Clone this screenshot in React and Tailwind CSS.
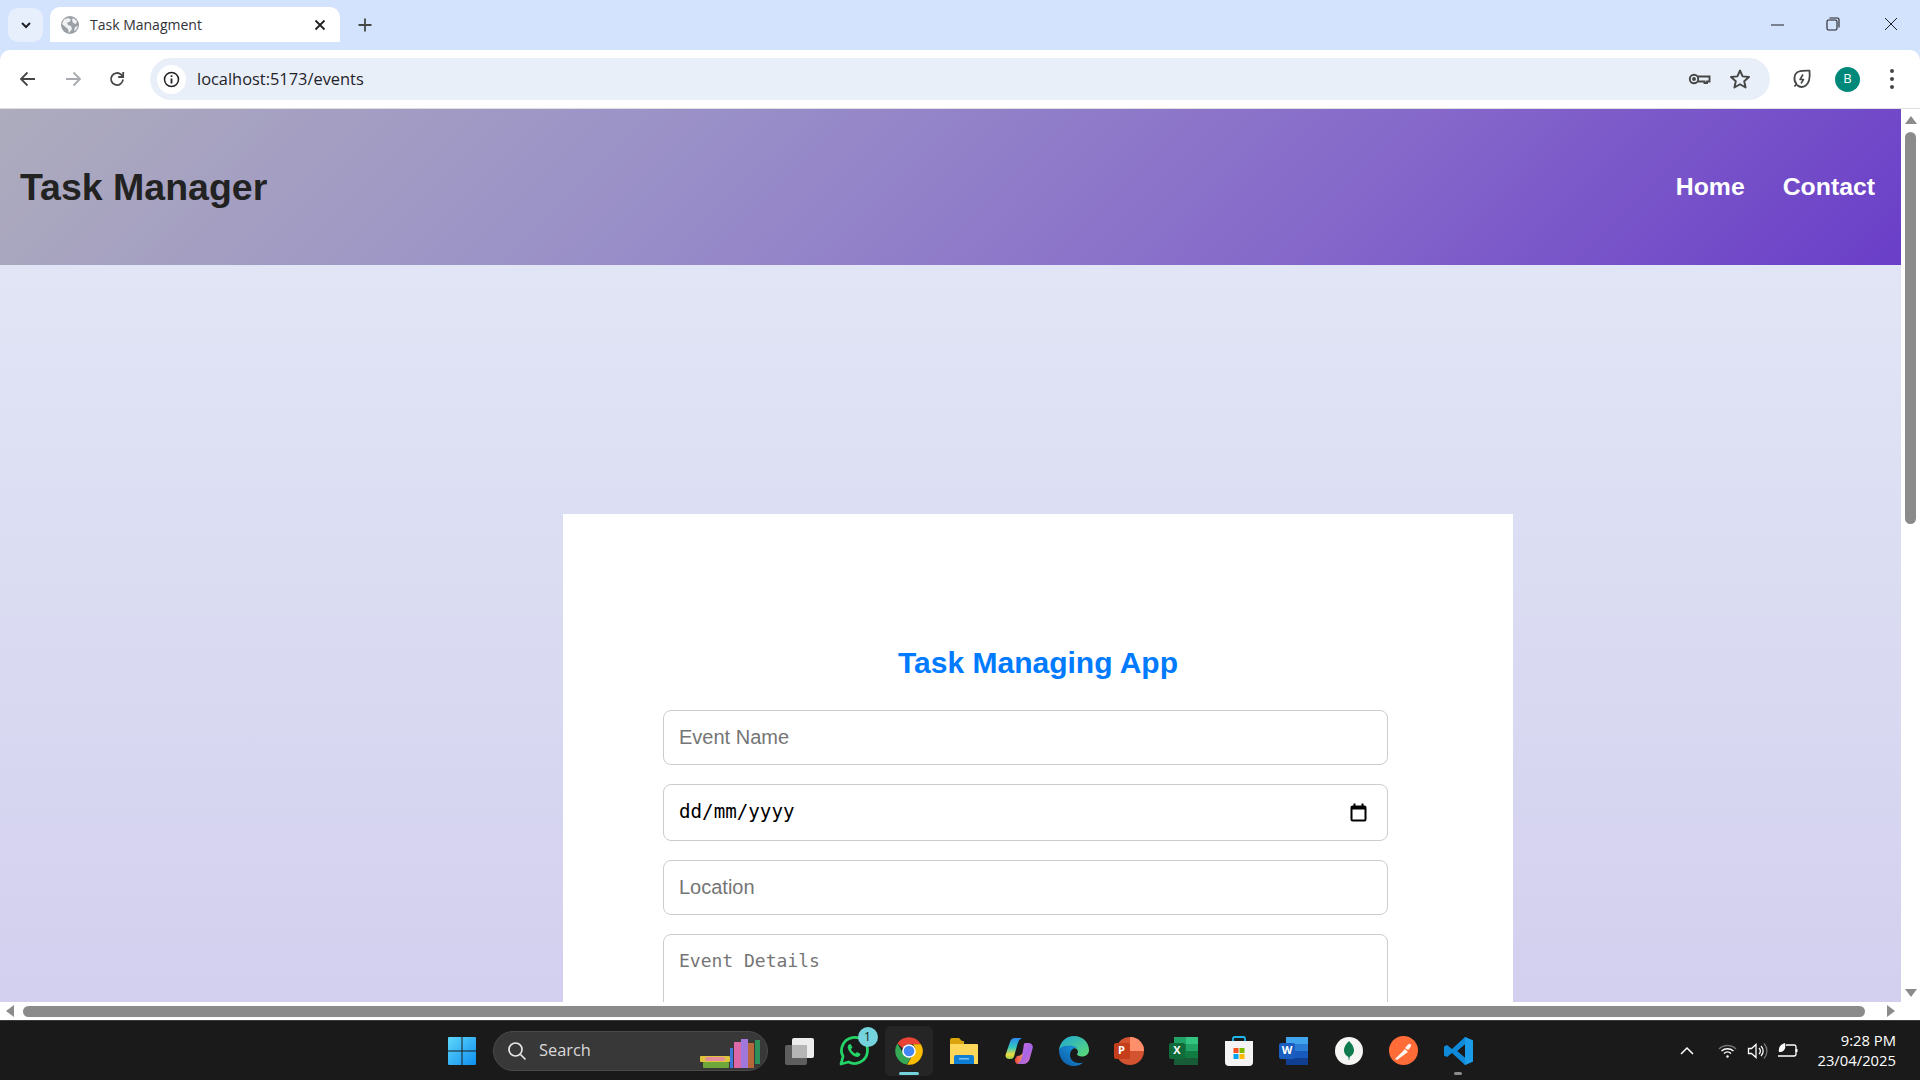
import React from 'react'

function Globe() {
  return (
    <svg width="18" height="18" viewBox="0 0 18 18">
      <circle cx="9" cy="9" r="9" fill="#9aa0a6" />
      <path d="M3 3.500 7 2l3 1.500L8.500 6 6 6.500 7 9l3 1 1 3-3 4-1-4-3-2.500L1 8z" fill="#fff" opacity=".85" />
      <path d="M12 2l4 3-1 3-3-1-1-3zM14 11l3-1-2 4-2 1z" fill="#fff" opacity=".85" />
    </svg>
  )
}

function ChromeTab() {
  return (
    <div className="flex h-[43px] w-[290px] items-center rounded-t-[10px] bg-white pb-[8px] pl-[11px] pr-[13px]">
      <Globe />
      <span className="ml-[11px] flex-1 text-[14px] text-[#303338]">Task Managment</span>
      <svg width="14" height="14" viewBox="0 0 14 14" stroke="#202124" strokeWidth="1.800" fill="none">
        <path d="M2.500 2.500l9 9M11.500 2.500l-9 9" />
      </svg>
    </div>
  )
}

function TabStrip() {
  return (
    <div className="flex h-[50px] shrink-0 items-end bg-[#d3e3fd] pl-2">
      <div className="mb-2 flex h-[34px] w-[35px] items-center justify-center rounded-[10px] bg-[#e8effc]">
        <svg width="14" height="14" viewBox="0 0 14 14" fill="none" stroke="#202124" strokeWidth="2">
          <path d="M3 5l4 4 4-4" />
        </svg>
      </div>
      <div className="ml-[7px]"><ChromeTab /></div>
      <div className="mb-[18px] ml-[18px]">
        <svg width="14" height="14" viewBox="0 0 14 14" stroke="#444746" strokeWidth="1.800"><path d="M7 .5v13M.5 7h13" /></svg>
      </div>
      <div className="mb-[19px] ml-auto flex items-center">
        <svg width="14" height="14" viewBox="0 0 14 14" stroke="#202124" strokeWidth="1"><path d="M1 8h13" /></svg>
        <svg className="ml-[42px]" width="14" height="14" viewBox="0 0 14 14" fill="none" stroke="#202124" strokeWidth="1.100">
          <rect x="1" y="3" width="10" height="10" rx="1.500" />
          <path d="M3.500 1h8a1.500 1.500 0 0 1 1.500 1.500v8" />
        </svg>
        <svg className="ml-[44px] mr-[22px]" width="14" height="14" viewBox="0 0 14 14" stroke="#202124" strokeWidth="1"><path d="M1 1l12 12M13 1L1 13" /></svg>
      </div>
    </div>
  )
}

function Toolbar() {
  return (
    <div className="flex h-[59px] shrink-0 items-center rounded-t-[10px] border-b border-[#dfdfdf] bg-white shadow-[0_-8px_0_#d3e3fd]">
      <svg className="ml-[18px]" width="20" height="20" viewBox="0 0 20 20" fill="none" stroke="#444746" strokeWidth="1.800"><path d="M17 10H3.500M9.500 3.500 3 10l6.500 6.500" /></svg>
      <svg className="ml-[25px]" width="20" height="20" viewBox="0 0 20 20" fill="none" stroke="#a8abaf" strokeWidth="1.800"><path d="M3 10h13.500M10.500 3.500 17 10l-6.500 6.500" /></svg>
      <svg className="ml-[24px]" width="20" height="20" viewBox="0 0 20 20" fill="none" stroke="#444746" strokeWidth="1.800">
        <path d="M16 10.500a6 6 0 1 1-1.800-4.800L16 7.500" />
        <path d="M16.200 3v5h-5" fill="none" />
      </svg>
      <div className="ml-[23px] flex h-[42px] w-[1620px] items-center rounded-full bg-[#e9eff9] pl-[7px]">
        <div className="flex h-[29px] w-[29px] items-center justify-center rounded-full bg-white">
          <svg width="17" height="17" viewBox="0 0 17 17" fill="none" stroke="#202124" strokeWidth="1.500">
            <circle cx="8.500" cy="8.500" r="7" />
            <path d="M8.500 7.500v5" strokeWidth="1.800" />
            <path d="M8.500 4.300v1.600" strokeWidth="1.800" />
          </svg>
        </div>
        <span className="ml-[11px] flex-1 text-[16.400px] text-[#1f2329]">localhost:5173/events</span>
        <svg width="24" height="24" viewBox="0 0 24 24" fill="none" stroke="#444746" strokeWidth="1.900">
          <circle cx="7" cy="12" r="4.200" />
          <circle cx="7" cy="12" r="1" fill="#444746" />
          <path d="M11 9.500h11.500v5H20v1.500h-2.500v-1.500H11" />
        </svg>
        <svg className="ml-[18px] mr-[19px]" width="22" height="22" viewBox="0 0 22 22" fill="none" stroke="#444746" strokeWidth="1.900" strokeLinejoin="round">
          <path d="M11 2.500l2.600 5.900 6.400.6-4.800 4.200 1.400 6.300L11 16.200l-5.600 3.300 1.400-6.300L2 9l6.400-.6z" />
        </svg>
      </div>
      <svg className="ml-[21px]" width="22" height="22" viewBox="0 0 22 22" fill="none" stroke="#444746" strokeWidth="1.800" strokeLinejoin="round">
        <path d="M3.500 18.500l2-2.500C2 12 3 5 8 3.500c3-1 7-.8 10.500-.8.500 5 .5 12-4 15-3 2-6 1.500-8.500-.700" />
        <path d="M12 6.500 9 11.500h3.500L10 15.500" strokeWidth="1.500" />
      </svg>
      <div className="ml-[22px] flex h-[25px] w-[25px] items-center justify-center rounded-full bg-[#00897b] text-[13px] text-white">B</div>
      <div className="ml-[30px] flex flex-col gap-[4px]">
        <span className="h-[4px] w-[4px] rounded-full bg-[#444746]"></span>
        <span className="h-[4px] w-[4px] rounded-full bg-[#444746]"></span>
        <span className="h-[4px] w-[4px] rounded-full bg-[#444746]"></span>
      </div>
    </div>
  )
}

function PageHeader() {
  return (
    <header className="flex h-[156px] items-center justify-between bg-[linear-gradient(135deg,#adacbd_0%,#9a90c8_35%,#8568ca_70%,#6a3ec8_100%)] pl-[20px] pr-[26px] font-['Liberation_Sans',sans-serif] font-bold">
      <h1 className="pt-[1px] text-[37.500px] text-[#222222]">Task Manager</h1>
      <nav className="flex gap-[38px] text-[24.800px] text-white">
        <span>Home</span>
        <span>Contact</span>
      </nav>
    </header>
  )
}

function EventForm() {
  const field = "block w-full rounded-[8px] border border-[#cccccc] bg-white px-[15px] outline-none placeholder:text-[#757575]"
  return (
    <div className="ml-[563px] mt-[249px] h-[700px] w-[950px] bg-white px-[100px] pt-[130px]">
      <h2 className="text-center font-['Liberation_Sans',sans-serif] text-[30px] font-bold leading-[38px] text-[#007bff]">Task Managing App</h2>
      <form className="mt-[28px] flex w-[725px] flex-col gap-[19px] font-['Liberation_Sans',sans-serif]">
        <input className={field + " h-[55px] text-[20px]"} placeholder="Event Name" />
        <div className={field + " flex h-[57px] items-center justify-between pr-[20px] font-['DejaVu_Sans_Mono',monospace] text-[19.200px] text-black"}>
          <span>dd/mm/yyyy</span>
          <svg width="17" height="19" viewBox="0 0 17 19" fill="none" stroke="#000" strokeWidth="2">
            <rect x="1.500" y="3.500" width="14" height="14" rx="1" />
            <path d="M1.500 5h14" strokeWidth="3" />
            <path d="M4.500 .500v3M12.500 .500v3" />
          </svg>
        </div>
        <input className={field + " h-[55px] text-[20px]"} placeholder="Location" />
        <textarea className={field + " h-[120px] resize-none py-[14px] font-['DejaVu_Sans_Mono',monospace] text-[18px] leading-[24px]"} placeholder="Event Details" />
      </form>
    </div>
  )
}

function VerticalScrollbar() {
  return (
    <div className="flex w-[19px] shrink-0 flex-col items-center bg-white pt-[7px]">
      <div className="h-0 w-0 border-x-[6px] border-b-[8px] border-x-transparent border-b-[#8b8b8b]"></div>
      <div className="mt-[8px] h-[392px] w-[11px] rounded-full bg-[#8b8b8b]"></div>
      <div className="mt-auto mb-[5px] h-0 w-0 border-x-[6px] border-t-[8px] border-x-transparent border-t-[#8b8b8b]"></div>
    </div>
  )
}

function HorizontalScrollbar() {
  return (
    <div className="flex h-[18px] shrink-0 items-center bg-white pl-[6px] pr-[25px]">
      <div className="h-0 w-0 border-y-[6px] border-r-[8px] border-y-transparent border-r-[#8b8b8b]"></div>
      <div className="ml-[9px] h-[11px] w-[1842px] rounded-full bg-[#8b8b8b]"></div>
      <div className="ml-auto h-0 w-0 border-y-[6px] border-l-[8px] border-y-transparent border-l-[#8b8b8b]"></div>
    </div>
  )
}

function Slot({ children }) {
  return <div className="relative flex h-[50px] w-[55px] items-center justify-center">{children}</div>
}

function WindowsLogo() {
  return (
    <svg width="30" height="30" viewBox="0 0 30 30">
      <defs>
        <linearGradient id="win" x1="0" y1="0" x2="1" y2="1">
          <stop offset="0" stopColor="#5fd8fb" />
          <stop offset="1" stopColor="#0d8ef0" />
        </linearGradient>
      </defs>
      <path d="M1 2a1 1 0 0 1 1-1h12.500v13.500H1zM15.500 1H28a1 1 0 0 1 1 1v12.500H15.500zM1 15.500h13.500V29H2a1 1 0 0 1-1-1zM15.500 15.500H29V28a1 1 0 0 1-1 1H15.500z" fill="url(#win)" />
    </svg>
  )
}

function Books() {
  return (
    <svg className="absolute right-[5px] top-[7px]" width="62" height="30" viewBox="0 0 62 30">
      <rect x="0" y="17" width="30" height="6" rx="1" fill="#e0c33c" />
      <rect x="5" y="18" width="20" height="4" rx="2" fill="#e58b9c" />
      <rect x="3" y="23" width="26" height="6" rx="1" fill="#6fa83a" />
      <rect x="30" y="9" width="3" height="20" fill="#3f78d8" />
      <rect x="34" y="3" width="7" height="26" fill="#dd68a8" />
      <rect x="41" y="0" width="7" height="29" fill="#a078dc" />
      <rect x="48" y="4" width="6" height="25" fill="#b8673a" />
      <rect x="55" y="1" width="5" height="24" fill="#2f8f5a" />
    </svg>
  )
}

function TaskView() {
  return (
    <svg width="30" height="30" viewBox="0 0 30 30">
      <rect x="1" y="9" width="22" height="20" rx="2" fill="#5e5e5e" />
      <rect x="8" y="2" width="22" height="20" rx="2" fill="#ececec" />
      <rect x="8" y="9" width="15" height="13" fill="#b5b5b5" />
    </svg>
  )
}

function WhatsApp() {
  return (
    <div className="relative">
      <svg width="32" height="32" viewBox="0 0 32 32" fill="none">
        <path d="M3 29l2-7.500A13 13 0 1 1 10.500 27z" stroke="#25d366" strokeWidth="2.800" strokeLinejoin="round" />
        <path d="M11 9.500c-2 1.500-1.500 4 .5 7s5 5.500 7.500 5.500c2 0 3.500-1.500 3.500-3l-3.500-2-1.500 1.500c-2-.5-4-2.500-4.500-4.500l1.500-1.500-2-3.500z" fill="#25d366" />
      </svg>
      <div className="absolute -right-[8px] -top-[8px] flex h-[20px] w-[20px] items-center justify-center rounded-full bg-[#74d3dc] text-[12px] text-[#1a1a1a]">1</div>
    </div>
  )
}

function ChromeIcon() {
  return (
    <svg width="30" height="30" viewBox="0 0 48 48">
      <path d="M24 2a22 22 0 0 1 19 11H24a11 11 0 0 0-10 6.500L5.500 12A22 22 0 0 1 24 2z" fill="#ea4335" />
      <path d="M5.500 12 15 28.500A11 11 0 0 0 27 34.700L20.500 45.700A22 22 0 0 1 5.500 12z" fill="#34a853" />
      <path d="M43 13a22 22 0 0 1-22 32.800L30 30a11 11 0 0 0 0-17z" fill="#fbbc04" />
      <circle cx="24" cy="24" r="11" fill="#fff" />
      <circle cx="24" cy="24" r="8.500" fill="#4285f4" />
    </svg>
  )
}

function Explorer() {
  return (
    <svg width="30" height="28" viewBox="0 0 30 28">
      <path d="M1 3a2 2 0 0 1 2-2h7l3 3h2v6H1z" fill="#dba40d" />
      <path d="M1 7h27a1 1 0 0 1 1 1v19H1z" fill="#fcd75a" />
      <path d="M5 27v-7a2 2 0 0 1 2-2h16a2 2 0 0 1 2 2v7z" fill="#0f7fd6" />
      <rect x="10" y="21" width="10" height="1.500" fill="#7cc4f4" />
    </svg>
  )
}

function Copilot() {
  return (
    <svg width="28" height="28" viewBox="0 0 28 28">
      <defs>
        <linearGradient id="copa" x1="0" y1="0" x2="0" y2="1">
          <stop offset="0" stopColor="#2a8cf0" />
          <stop offset=".45" stopColor="#35c8c0" />
          <stop offset=".8" stopColor="#f2dc3c" />
          <stop offset="1" stopColor="#8ccf50" />
        </linearGradient>
        <linearGradient id="copb" x1="0" y1="0" x2="1" y2="1">
          <stop offset="0" stopColor="#d86cd8" />
          <stop offset=".55" stopColor="#a565e8" />
          <stop offset="1" stopColor="#e070b8" />
        </linearGradient>
        <linearGradient id="copc" x1="0" y1="0" x2="1" y2="0">
          <stop offset="0" stopColor="#e8403c" />
          <stop offset="1" stopColor="#f59a70" />
        </linearGradient>
      </defs>
      <path d="M10 1h7c-2.500 1-3.500 3-4.500 6L9 19.500c-.7 2-2 2.500-3.500 2.500H4c-2.500 0-4-2-3.300-4.500L5 5c.8-2.500 2.500-4 5-4z" fill="url(#copa)" />
      <path d="M20 6h3.500c3 0 4.800 2.300 4.200 5L25 21c-1 4-3.500 6-7 6h-6c2.500-1 3.500-3 4.500-6l2-11c.3-2 .5-4 1.500-4z" fill="url(#copb)" />
      <path d="M12 27c3-1 4-3 5-7l1-4c-2 2-3 3-6 3l-2 3c-.5 2 .5 4 2 5z" fill="url(#copc)" />
    </svg>
  )
}

function Edge() {
  return (
    <svg width="30" height="30" viewBox="0 0 30 30">
      <defs>
        <linearGradient id="edgeA" x1="0" y1="1" x2="1" y2="0">
          <stop offset="0" stopColor="#0c59a4" />
          <stop offset="1" stopColor="#1b9de2" />
        </linearGradient>
        <linearGradient id="edgeB" x1="0" y1="0" x2="1" y2="1">
          <stop offset="0" stopColor="#1fa6d9" />
          <stop offset="1" stopColor="#5fdc70" />
        </linearGradient>
      </defs>
      <path d="M15 0c9 0 15 6.500 15 14 0 4-3 6.500-7 6.500-3 0-5-1-5-2.500 2-1.500 1-6-3.500-6S8 15 9 20c-5-2-9-6-9-6C1 6 7 0 15 0z" fill="url(#edgeB)" />
      <path d="M0 14c0 9 6 16 15 16 4 0 7-1.500 9-3.500-6 2-13-1-13-7.500 0-4 3-7.500 7.500-7.500C14 9 9 9 5 10c-3 1-5 3-5 4z" fill="url(#edgeA)" />
    </svg>
  )
}

function PowerPoint() {
  return (
    <div className="relative h-[28px] w-[30px]">
      <svg width="30" height="28" viewBox="0 0 30 28">
        <circle cx="16" cy="14" r="14" fill="#d35230" />
        <path d="M16 0a14 14 0 0 1 14 14H16z" fill="#ff8f6b" />
      </svg>
      <div className="absolute left-0 top-[6px] flex h-[16px] w-[16px] items-center justify-center rounded-[2px] bg-[#c43e1c] text-[11px] font-bold text-white">P</div>
    </div>
  )
}

function Excel() {
  return (
    <div className="relative h-[28px] w-[29px]">
      <svg width="29" height="28" viewBox="0 0 29 28">
        <rect x="5" y="0" width="24" height="28" rx="1.500" fill="#107c41" />
        <rect x="17" y="0" width="12" height="7" fill="#33c481" />
        <rect x="5" y="0" width="12" height="7" fill="#21a366" />
        <rect x="17" y="7" width="12" height="7" fill="#21a366" />
        <rect x="5" y="21" width="24" height="7" fill="#185c37" />
      </svg>
      <div className="absolute left-0 top-[6px] flex h-[16px] w-[16px] items-center justify-center rounded-[2px] bg-[#0f6b3a] text-[11px] font-bold text-white">X</div>
    </div>
  )
}

function Store() {
  return (
    <svg width="28" height="30" viewBox="0 0 28 30">
      <path d="M8 5V2.500A1.500 1.500 0 0 1 9.500 1h9A1.500 1.500 0 0 1 20 2.500V5" fill="none" stroke="#1fb6ef" strokeWidth="1.800" />
      <path d="M0 5h28v21a4 4 0 0 1-4 4H4a4 4 0 0 1-4-4z" fill="#f4f4f4" />
      <rect x="8.500" y="12" width="5" height="5" fill="#f25022" />
      <rect x="14.500" y="12" width="5" height="5" fill="#7fba00" />
      <rect x="8.500" y="18" width="5" height="5" fill="#00a4ef" />
      <rect x="14.500" y="18" width="5" height="5" fill="#ffb900" />
    </svg>
  )
}

function Word() {
  return (
    <div className="relative h-[28px] w-[29px]">
      <svg width="29" height="28" viewBox="0 0 29 28">
        <rect x="7" y="0" width="22" height="28" rx="1.500" fill="#185abd" />
        <rect x="7" y="0" width="22" height="7" fill="#41a5ee" />
        <rect x="7" y="7" width="22" height="7" fill="#2b7cd3" />
        <rect x="7" y="21" width="22" height="7" fill="#103f91" />
      </svg>
      <div className="absolute left-0 top-[6px] flex h-[16px] w-[16px] items-center justify-center rounded-[2px] bg-[#1a5dc0] text-[11px] font-bold text-white">W</div>
    </div>
  )
}

function Mongo() {
  return (
    <svg width="28" height="28" viewBox="0 0 28 28">
      <circle cx="14" cy="14" r="14" fill="#f5f5f3" />
      <path d="M14 4c4 4 5 7 5 9.500 0 3.500-3 5.500-4.300 6.500L14 24l-.7-4C12 19 9 17 9 13.500 9 11 10 8 14 4z" fill="#0f7a4d" />
    </svg>
  )
}

function Postman() {
  return (
    <svg width="29" height="29" viewBox="0 0 29 29">
      <circle cx="14.500" cy="14.500" r="14.500" fill="#ff6c37" />
      <path d="M6 23l10-10 3 3-11 8zM16 12l3-3.500c1.500-1.500 3-.5 3 1s-1 2.500-3 4.500z" fill="#fff" opacity=".92" />
    </svg>
  )
}

function VSCode() {
  return (
    <svg width="30" height="30" viewBox="0 0 30 30">
      <path d="M21 1l8 3.500v21L21 29 8 17l-5 4-3-1.500v-9L3 9l5 4zM21 8.500 13.500 15l7.500 6.500z" fill="#0f8ad8" />
      <path d="M21 1l8 3.500v21L21 29z" fill="#1a9ce8" />
      <path d="M21 8.500 13.500 15l7.500 6.500z" fill="#1a1a1a" />
    </svg>
  )
}

function Tray() {
  return (
    <div className="ml-auto flex items-center pr-[24px] text-white">
      <svg width="14" height="10" viewBox="0 0 14 10" fill="none" stroke="#fff" strokeWidth="1.500"><path d="M1 8l6-6 6 6" /></svg>
      <svg className="ml-[24px]" width="19" height="16" viewBox="0 0 19 16" fill="none" stroke="#fff" strokeWidth="1.400">
        <path d="M1 6a12 12 0 0 1 17 0" opacity=".4" />
        <path d="M3.500 8a9 9 0 0 1 12 0M6 10.500a5 5 0 0 1 7 0" />
        <circle cx="9.500" cy="13.500" r="1.200" fill="#fff" stroke="none" />
      </svg>
      <svg className="ml-[10px]" width="21" height="18" viewBox="0 0 21 18" fill="none" stroke="#fff" strokeWidth="1.300">
        <path d="M1.500 6.500h3L9 2.500v13l-4.500-4h-3z" />
        <path d="M12 6a4 4 0 0 1 0 6M14 4a7 7 0 0 1 0 10" />
        <path d="M17 1.500a11 11 0 0 1 0 15" opacity=".4" />
      </svg>
      <svg className="ml-[9px]" width="22" height="18" viewBox="0 0 22 18" fill="none" stroke="#fff" strokeWidth="1.300">
        <path d="M9 3h8a2 2 0 0 1 2 2v7a2 2 0 0 1-2 2H1" />
        <path d="M19.500 7v3" strokeWidth="2" />
        <path d="M2 10C1 5 4 2 8 1c1 4 0 8-4 9z" fill="#fff" stroke="none" />
      </svg>
      <div className="ml-[18px] -translate-y-[1px] text-right font-['Open_Sans',sans-serif] text-[14.800px] leading-[20px]">
        <div>9:28 PM</div>
        <div>23/04/2025</div>
      </div>
    </div>
  )
}

function Taskbar() {
  return (
    <div className="flex h-[60px] shrink-0 items-center border-t border-[#3a3a3a] bg-[#1a1a1a] pl-[447px] font-['Open_Sans',sans-serif]">
      <WindowsLogo />
      <div className="relative ml-[16px] flex h-[40px] w-[275px] items-center rounded-full border border-[#4a4a4a] bg-[#383838] pl-[13px]">
        <svg width="20" height="20" viewBox="0 0 20 20" fill="none" stroke="#e6e6e6" strokeWidth="1.700">
          <circle cx="8.500" cy="8.500" r="6.500" />
          <path d="M13.500 13.500l5 5" />
        </svg>
        <span className="ml-[12px] text-[16.400px] text-[#d8d8d8]">Search</span>
        <Books />
      </div>
      <div className="ml-[3px] flex items-center">
        <Slot><TaskView /></Slot>
        <Slot><WhatsApp /></Slot>
        <Slot>
          <div className="relative flex h-[50px] w-[48px] items-center justify-center rounded-[6px] bg-[#252525]">
            <ChromeIcon />
            <span className="absolute bottom-[1px] left-[14px] h-[3px] w-[20px] rounded-full bg-[#74d3dc]"></span>
          </div>
        </Slot>
        <Slot><Explorer /></Slot>
        <Slot><Copilot /></Slot>
        <Slot><Edge /></Slot>
        <Slot><PowerPoint /></Slot>
        <Slot><Excel /></Slot>
        <Slot><Store /></Slot>
        <Slot><Word /></Slot>
        <Slot><Mongo /></Slot>
        <Slot><Postman /></Slot>
        <Slot>
          <VSCode />
          <span className="absolute bottom-[1px] left-[23px] h-[3px] w-[8px] rounded-full bg-[#8b8b8b]"></span>
        </Slot>
      </div>
      <Tray />
    </div>
  )
}

export default function App() {
  return (
    <div className="flex h-screen flex-col overflow-hidden bg-white font-['Open_Sans',sans-serif]">
      <TabStrip />
      <Toolbar />
      <div className="flex min-h-0 flex-1">
        <main className="min-w-0 flex-1 overflow-hidden bg-[linear-gradient(180deg,#e4e9f7_0%,#dcdff3_45%,#d3cfef_100%)]">
          <PageHeader />
          <EventForm />
        </main>
        <VerticalScrollbar />
      </div>
      <HorizontalScrollbar />
      <Taskbar />
    </div>
  )
}
